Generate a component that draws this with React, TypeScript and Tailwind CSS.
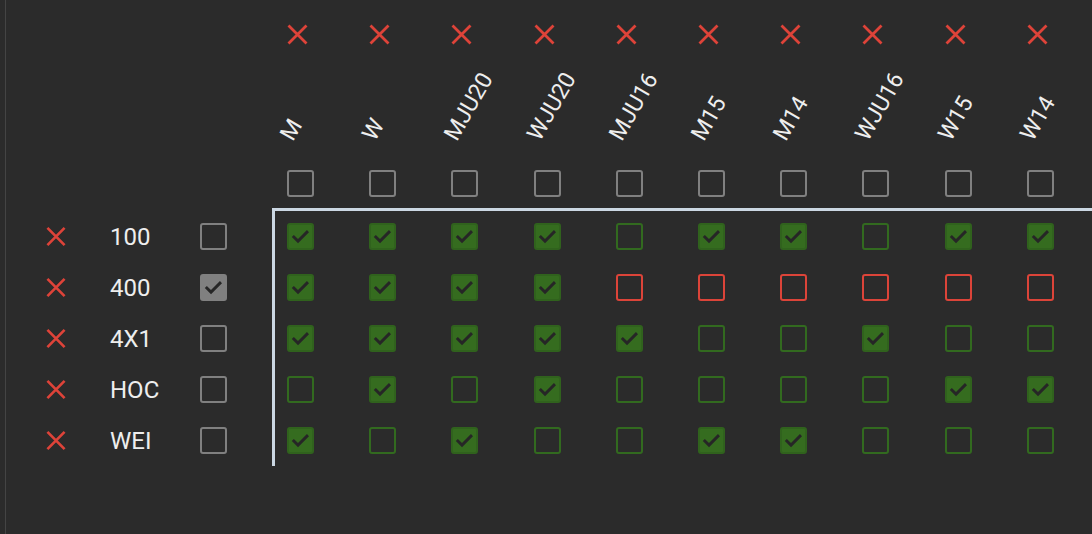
import React from "react";

type Kind = "on" | "off" | "red" | "gray" | "grayOn";

const cols = ["M", "W", "MJU20", "WJU20", "MJU16", "M15", "M14", "WJU16", "W15", "W14"];

const rows: { label: string; checked: boolean; cells: string }[] = [
  { label: "100", checked: false, cells: "1111011011" },
  { label: "400", checked: true, cells: "1111rrrrrr" },
  { label: "4X1", checked: false, cells: "1111100100" },
  { label: "HOC", checked: false, cells: "0101000011" },
  { label: "WEI", checked: false, cells: "1010011000" },
];

function XIcon() {
  return (
    <svg width="21" height="21" viewBox="0 0 21 21" className="block">
      <path d="M1.5 1.5 L19.5 19.5 M19.5 1.5 L1.5 19.5" stroke="#de4339" strokeWidth="2.8" fill="none" />
    </svg>
  );
}

function Check() {
  return (
    <svg viewBox="0 0 24 24" className="absolute inset-0 w-full h-full">
      <polyline points="4,11.4 9.4,16.8 19.8,6.4" stroke="#262626" strokeWidth="3" fill="none" />
    </svg>
  );
}

function Box({ kind }: { kind: Kind }) {
  const cls =
    kind === "on"
      ? "border-[#30621d] bg-[#356c1f]"
      : kind === "off"
      ? "border-[#326a1f]"
      : kind === "red"
      ? "border-[#dc4439]"
      : kind === "grayOn"
      ? "border-[#808080] bg-[#808080]"
      : "border-[#808080]";
  return (
    <div className={`relative size-[27px] rounded-[3px] border-[2.5px] ${cls}`}>
      {(kind === "on" || kind === "grayOn") && <Check />}
    </div>
  );
}

export default function App() {
  return (
    <div
      className="w-full h-screen bg-[#2b2b2b] overflow-hidden text-[#eeeeee]"
      style={{ fontFamily: "Roboto, 'Noto Sans', sans-serif" }}
    >
      <div className="ml-[5px] h-full border-l border-[#444444] flex flex-col">
        {/* header */}
        <div className="flex">
          <div className="w-[269px] shrink-0" />
          {cols.map((c) => (
            <div key={c} className="w-[82.2px] shrink-0 flex flex-col pl-[12px]">
              <div className="h-[68px] flex items-center">
                <XIcon />
              </div>
              <div className="h-[92px] pt-[54.6px] pl-[6px]">
                <span className="inline-block whitespace-nowrap text-[23px] leading-[23px] origin-[0_19.4px] rotate-[-60deg]">
                  {c}
                </span>
              </div>
              <div className="h-[48px] pt-[10px]">
                <Box kind="gray" />
              </div>
            </div>
          ))}
        </div>
        {/* body */}
        <div className="flex">
          <div className="w-[266px] shrink-0 mt-[3px] flex flex-col">
            {rows.map((r) => (
              <div key={r.label} className="h-[51px] flex items-center">
                <div className="ml-[40px] w-[20px] flex justify-center">
                  <XIcon />
                </div>
                <div className="ml-[44px] w-[90px] text-[24px] leading-none">{r.label}</div>
                <Box kind={r.checked ? "grayOn" : "gray"} />
              </div>
            ))}
          </div>
          <div className="flex-1 min-w-0 border-l-[3px] border-t-[3px] border-[#cbd7e3] flex flex-col">
            {rows.map((r) => (
              <div key={r.label} className="h-[51px] flex items-center">
                {r.cells.split("").map((v, i) => (
                  <div key={i} className="w-[82.2px] shrink-0 pl-[12px]">
                    <Box kind={v === "1" ? "on" : v === "r" ? "red" : "off"} />
                  </div>
                ))}
              </div>
            ))}
          </div>
        </div>
      </div>
    </div>
  );
}
